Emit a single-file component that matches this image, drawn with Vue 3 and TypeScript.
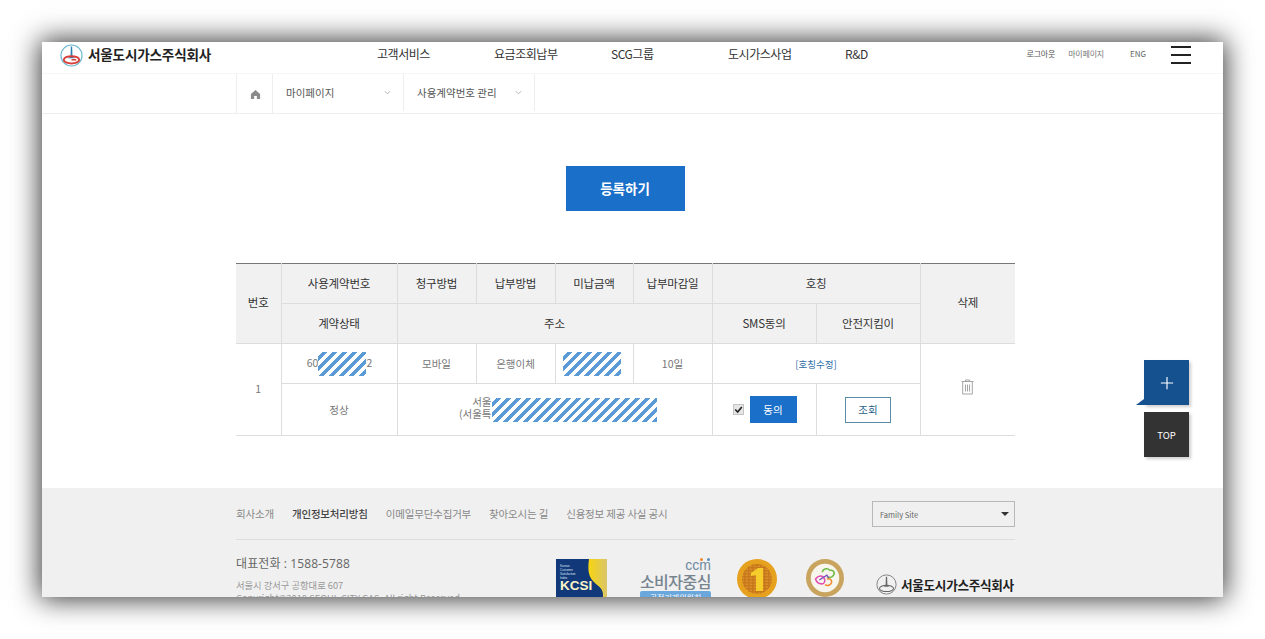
<script setup lang="ts">
const nav: string[] = ['고객서비스', '요금조회납부', 'SCG그룹', '도시가스사업', 'R&D']
const links: { t: string; strong?: boolean }[] = [
  { t: '회사소개' },
  { t: '개인정보처리방침', strong: true },
  { t: '이메일무단수집거부' },
  { t: '찾아오시는 길' },
  { t: '신용정보 제공 사실 공시' },
]
</script>

<template>
  <div class="stage">
    <div class="window">
      <header class="top">
        <a class="brand">
          <svg class="brand-mark" viewBox="0 0 24 24" width="23" height="23">
            <circle cx="12" cy="12" r="11" fill="#fff" stroke="#6db8d2" stroke-width="1.200" />
            <path d="M11.300 2.500h1.400l.3 9.500c.2 1.500 1.500 2.400 3 2.800H8c1.500-.4 2.800-1.300 3-2.800z" fill="#2f7fb0" />
            <ellipse cx="12" cy="16.500" rx="8" ry="3.800" fill="none" stroke="#d8403a" stroke-width="2" />
            <path d="M12 16.500h5" stroke="#d8403a" stroke-width="1.600" />
          </svg>
          <span class="brand-name">서울도시가스주식회사</span>
        </a>
        <nav class="gnb">
          <a v-for="n in nav" :key="n" class="gnb-item">{{ n }}</a>
        </nav>
        <div class="util">
          <a class="util-a">로그아웃</a>
          <a class="util-b">마이페이지</a>
          <a class="util-c">ENG</a>
          <span class="burger"><i></i><i></i><i></i></span>
        </div>
      </header>

      <div class="crumbs">
        <div class="crumb-home">
          <svg viewBox="0 0 12 12" width="11" height="11"><path d="M6 1 1 5.500V11h3.500V7.500h3V11H11V5.500z" fill="#8b8b8b" /></svg>
        </div>
        <div class="crumb"><span>마이페이지</span><svg viewBox="0 0 8 5" width="7" height="5"><path d="M1 1l3 3 3-3" fill="none" stroke="#aaa" /></svg></div>
        <div class="crumb"><span>사용계약번호 관리</span><svg viewBox="0 0 8 5" width="7" height="5"><path d="M1 1l3 3 3-3" fill="none" stroke="#aaa" /></svg></div>
      </div>

      <main class="content">
        <div class="reg-row"><button class="reg">등록하기</button></div>
        <table class="grid">
          <colgroup>
            <col class="c45" /><col class="c116" /><col class="c79" /><col class="c79" /><col class="c78" /><col class="c79" /><col class="c104" /><col class="c104" /><col class="c95" />
          </colgroup>
          <thead>
            <tr>
              <th rowspan="2" class="tall">번호</th>
              <th>사용계약번호</th>
              <th>청구방법</th>
              <th>납부방법</th>
              <th>미납금액</th>
              <th>납부마감일</th>
              <th colspan="2">호칭</th>
              <th rowspan="2" class="tall">삭제</th>
            </tr>
            <tr>
              <th>계약상태</th>
              <th colspan="4">주소</th>
              <th>SMS동의</th>
              <th>안전지킴이</th>
            </tr>
          </thead>
          <tbody>
            <tr class="r1">
              <td rowspan="2" class="num">1</td>
              <td class="acct">60<span class="hatch h1"></span>2</td>
              <td>모바일</td>
              <td>은행이체</td>
              <td><span class="hatch h2"></span></td>
              <td>10일</td>
              <td colspan="2"><a class="rename">[호칭수정]</a></td>
              <td rowspan="2" class="del">
                <svg viewBox="0 0 14 16" width="14" height="16">
                  <path d="M1 2.500h12M5 2.500V1h4v1.500M2.200 2.500V15h9.600V2.500M5 5.500v7M7 5.500v7M9 5.500v7" fill="none" stroke="#a5a5a5" stroke-width="1" />
                </svg>
              </td>
            </tr>
            <tr class="r2">
              <td>정상</td>
              <td colspan="4">
                <div class="addr">
                  <div class="addr-text">서울<br />(서울특</div>
                  <span class="hatch h3"></span>
                </div>
              </td>
              <td>
                <div class="sms">
                  <span class="check"><svg viewBox="0 0 11 11" width="9" height="9"><path d="M1.500 5.500 4.500 8.500 9.500 2.500" fill="none" stroke="#222" stroke-width="2" /></svg></span>
                  <button class="agree">동의</button>
                </div>
              </td>
              <td><button class="lookup">조회</button></td>
            </tr>
          </tbody>
        </table>
      </main>

      <footer class="foot">
        <div class="foot-links">
          <div class="links">
            <a v-for="l in links" :key="l.t" :class="{ strong: l.strong }">{{ l.t }}</a>
          </div>
          <div class="family">
            <span>Family Site</span>
            <i class="caret"></i>
          </div>
        </div>
        <div class="foot-info">
          <div class="addr-block">
            <p class="tel">대표전화 : 1588-5788</p>
            <p class="post">서울시 강서구 공항대로 607</p>
            <p class="post">Copyright©2019 SEOUL CITY GAS. All right Reserved.</p>
          </div>
          <div class="marks">
            <svg class="kcsi" viewBox="0 0 51 50" width="51" height="50">
              <defs>
                <linearGradient id="kg" x1="0" x2="1" y1="0" y2="0"><stop offset="0" stop-color="#f7d50f" /><stop offset="1" stop-color="#d9c56a" /></linearGradient>
              </defs>
              <rect width="51" height="50" fill="#11397a" />
              <path d="M33 0h18v36c-4-6-9-9-13-13-4-4-7-9-5-23z" fill="url(#kg)" />
              <path d="M38 23c6 4 9 8 9 13 0 6-4 11-8 14h12V30c-4-3-8-5-13-7z" fill="url(#kg)" />
              <text class="kcsi-s" x="4" y="8">Korean</text>
              <text class="kcsi-s" x="4" y="12">Customer</text>
              <text class="kcsi-s" x="4" y="16">Satisfaction</text>
              <text class="kcsi-s" x="4" y="20">Index</text>
              <text x="4" y="31" class="kcsi-t">KCSI</text>
            </svg>
            <div class="ccm">
              <span class="ccm-top">ccm<i class="dot d1"></i><i class="dot d2"></i></span>
              <span class="ccm-main">소비자중심</span>
              <span class="ccm-band">공정거래위원회</span>
            </div>
            <svg class="medal" viewBox="0 0 40 40" width="40" height="40">
              <defs>
                <pattern id="brick" width="4" height="3" patternUnits="userSpaceOnUse">
                  <rect width="4" height="3" fill="#c9781b" />
                  <rect x=".5" y=".5" width="2.500" height="1.500" fill="#d88f28" />
                </pattern>
              </defs>
              <circle cx="20" cy="20" r="20" fill="#e6a11e" />
              <circle cx="20" cy="20" r="15" fill="url(#brick)" />
              <path d="M14 14l7-5h5v23h-7V16l-5 1z" fill="#f5cc2a" />
            </svg>
            <svg class="medal2" viewBox="0 0 40 40" width="38" height="38">
              <circle cx="20" cy="20" r="20" fill="#c8a45f" />
              <circle cx="20" cy="20" r="15" fill="#f7f5ec" />
              <path d="M10 21c3-4 7-4 9-1 2 3 0 7-3 6-3 0-5-2-6-5z" fill="none" stroke="#e24fb0" stroke-width="1.600" />
              <path d="M17 14c1-4 6-5 8-2 3-1 6 2 4 5-1 2-4 3-7 2" fill="none" stroke="#6dbb45" stroke-width="1.600" />
              <path d="M20 27c3 2 7 0 7-3 0-2-2-4-5-3" fill="none" stroke="#ef8a34" stroke-width="1.600" />
              <path d="M14 22l8-5 2 3" fill="none" stroke="#7a4fc0" stroke-width="1.300" />
            </svg>
            <div class="foot-brand">
              <svg viewBox="0 0 24 24" width="21" height="21">
                <circle cx="12" cy="12" r="11" fill="none" stroke="#777" stroke-width="1" />
                <path d="M11.300 3h1.400l.3 9c.2 1.400 1.400 2.300 2.800 2.700H8.200c1.400-.4 2.600-1.300 2.800-2.700z" fill="#666" />
                <ellipse cx="12" cy="16.500" rx="8" ry="3.600" fill="none" stroke="#666" stroke-width="1.200" />
              </svg>
              <span>서울도시가스주식회사</span>
            </div>
          </div>
        </div>
      </footer>

      <div class="float">
        <button class="fab">
          <svg viewBox="0 0 16 16" width="14" height="14"><path d="M8 1v14M1 8h14" stroke="#fff" stroke-width="1.300" /></svg>
        </button>
        <button class="totop">TOP</button>
      </div>
    </div>
  </div>
</template>

<style>
html, body { margin: 0; background: #fff; overflow: hidden; }
</style>

<style scoped>
.stage {
  box-sizing: border-box;
  width: 1265px;
  height: 639px;
  padding: 42px;
  font-family: "Noto Sans CJK KR", "Noto Sans", sans-serif;
  color: #333;
  font-size: 12px;
}
.window {
  position: relative;
  height: 555px;
  overflow: hidden;
  background: #fff;
  box-shadow: 0 0 26px 2px rgba(0, 0, 0, 0.8);
}
p { margin: 0; }
a { cursor: pointer; }
button { font-family: inherit; border: 0; padding: 0; cursor: pointer; }

.top {
  display: flex;
  align-items: flex-start;
  height: 32px;
  border-bottom: 1px solid #f6f6f6;
  box-sizing: border-box;
}
.brand {
  display: flex;
  align-items: center;
  gap: 5px;
  width: 335px;
  padding: 1px 0 0 18px;
  box-sizing: border-box;
}
.brand-name {
  font-size: 13.600px;
  font-weight: 700;
  letter-spacing: -0.2px;
  color: #222;
  line-height: 22px;
  padding-bottom: 3px;
}
.gnb { display: flex; padding-top: 3px; }
.gnb-item {
  width: 117px;
  font-size: 12px;
  line-height: 18px;
  letter-spacing: -0.45px;
  color: #333;
}
.util {
  display: flex;
  align-items: flex-start;
  margin-left: auto;
  padding: 4px 32px 0 0;
  font-size: 8px;
  color: #777;
}
.util-a, .util-b, .util-c { line-height: 16px; white-space: nowrap; }
.util-a { color: #555; letter-spacing: -0.2px; }
.util-b { margin-left: 13px; letter-spacing: -0.2px; }
.util-c { margin-left: 26px; color: #666; width: 15px; }
.burger {
  display: flex;
  flex-direction: column;
  gap: 6px;
  width: 20px;
  margin-left: 26px;
}
.burger i { display: block; height: 2px; background: #222; }

.crumbs {
  display: flex;
  height: 39px;
  padding-left: 194px;
  border-bottom: 1px solid #eee;
}
.crumb-home {
  display: flex;
  align-items: center;
  justify-content: center;
  width: 37px;
  border-left: 1px solid #eee;
  border-right: 1px solid #eee;
  padding: 2px 0 0 1px;
  box-sizing: border-box;
}
.crumb {
  display: flex;
  align-items: center;
  justify-content: space-between;
  box-sizing: border-box;
  width: 131px;
  height: 37px;
  padding: 0 12px 0 13px;
  border-right: 1px solid #eee;
  font-size: 10.500px;
  color: #555;
}

.content {
  width: 779px;
  margin-left: 194px;
}
.reg-row {
  display: flex;
  justify-content: center;
  padding: 52px 0 52px 0;
  margin-left: -1px;
}
.reg {
  width: 119px;
  height: 45px;
  padding-bottom: 2px;
  background: #1a6fc9;
  color: #fff;
  font-size: 13.500px;
  font-weight: 700;
}
.grid {
  width: 779px;
  table-layout: fixed;
  border-collapse: collapse;
  border-top: 1px solid #777;
  border-bottom: 1px solid #ddd;
  margin-bottom: 52px;
}
.c45 { width: 45px; }
.c116 { width: 116px; }
.c79 { width: 79px; }
.c78 { width: 78px; }
.c104 { width: 104px; }
.c95 { width: 95px; }
th {
  height: 37px;
  padding: 0 0 2px;
  background: #f1f1f1;
  border: 1px solid #ddd;
  border-top: 0;
  font-size: 11.500px;
  font-weight: 400;
  color: #333;
  letter-spacing: -0.2px;
}
th.tall { padding-bottom: 4px; }
td {
  padding: 0;
  border: 1px solid #ddd;
  text-align: center;
  font-size: 10.500px;
  color: #777;
}
th:first-child, td:first-child { border-left: 0; }
tr > :last-child { border-right: 0; }
.r1 td { height: 39px; }
.r2 td { height: 51px; }
.grid tbody tr:last-child td { border-bottom: 0; }
td.num { padding-bottom: 2px; }
td.acct { padding-left: 1px; }
.hatch {
  display: inline-block;
  vertical-align: middle;
  height: 24px;
  background: repeating-linear-gradient(135deg, #fff 0 3.500px, #5b9bd5 3.500px 7px);
}
.h1 { width: 48px; }
.h2 { width: 58px; margin-right: 4px; }
.h3 { width: 165px; flex: none; }
.rename { color: #2d6ea8; font-size: 9.500px; }
.addr {
  display: flex;
  align-items: center;
  justify-content: flex-start;
  padding-left: 60px;
  line-height: 12px;
}
.addr-text { width: 34px; padding-bottom: 4px; text-align: right; white-space: nowrap; }
.sms {
  display: flex;
  align-items: center;
  padding-left: 20px;
  gap: 6px;
}
.check {
  display: flex;
  align-items: center;
  justify-content: center;
  width: 11px;
  height: 11px;
  background: #e6e6e6;
  border: 1px solid #c4c4c4;
  box-sizing: border-box;
}
.agree {
  width: 47px;
  height: 27px;
  background: #1a6fc9;
  color: #fff;
  font-size: 10.500px;
}
.lookup {
  width: 46px;
  height: 26px;
  background: #fff;
  border: 1px solid #5d8aa6;
  color: #1f5f86;
  font-size: 10.500px;
}
.del svg { display: block; margin: -5px auto 0; transform: translateX(-.5px); }

.foot {
  background: #f0f0f0;
  padding: 0 208px 0 194px;
  height: 109px;
  overflow: hidden;
}
.foot-links {
  display: flex;
  align-items: center;
  justify-content: space-between;
  height: 52px;
  box-sizing: border-box;
  border-bottom: 1px solid #ddd;
}
.links { display: flex; gap: 18px; font-size: 10.500px; color: #888; letter-spacing: -0.18px; }
.links .strong { color: #444; font-weight: 500; }
.family {
  display: flex;
  align-items: center;
  justify-content: space-between;
  box-sizing: border-box;
  width: 143px;
  height: 26px;
  padding: 1px 5px 0 7px;
  border: 1px solid #b8b8b8;
  font-size: 7.500px;
  color: #666;
}
.caret {
  width: 0;
  height: 0;
  border-left: 4.500px solid transparent;
  border-right: 4.500px solid transparent;
  border-top: 4.500px solid #333;
}
.foot-info { display: flex; padding-top: 19px; }
.addr-block { width: 320px; flex: none; white-space: nowrap; }
.tel {
  font-family: "Open Sans", "Noto Sans CJK KR", sans-serif;
  font-size: 12px;
  line-height: 9px;
  color: #666;
  letter-spacing: 0.1px;
  margin: 0 0 11px;
}
.post { font-size: 9.300px; line-height: 13px; color: #999; }
.marks { display: flex; align-items: flex-start; }
.kcsi { display: block; flex: none; }
.kcsi-s { font-family: "Liberation Sans", sans-serif; font-size: 3px; fill: #dfe6f2; }
.kcsi-t { font-family: "Liberation Sans", sans-serif; font-size: 13.500px; font-weight: 700; fill: #fbf4c8; }
.ccm {
  display: flex;
  flex-direction: column;
  align-items: flex-end;
  width: 71px;
  flex: none;
  margin-left: 33px;
}
.ccm-top { position: relative; font-family: "Liberation Sans", sans-serif; font-size: 14px; line-height: 13px; color: #6f8aa0; }
.dot { position: absolute; top: -1px; width: 3px; height: 3px; border-radius: 50%; }
.d1 { right: 8px; background: #ea8a2c; }
.d2 { right: 1px; background: #5a8fc2; }
.ccm-main { font-size: 16px; font-weight: 500; line-height: 19px; color: #76848f; letter-spacing: -0.5px; white-space: nowrap; }
.ccm-band { align-self: stretch; height: 14px; background: #6aa7dc; color: #fff; font-size: 8px; line-height: 13px; text-align: center; border-radius: 2px; }
.medal { display: block; margin-left: 26px; flex: none; }
.medal2 { display: block; margin-left: 29px; flex: none; }
.foot-brand {
  display: flex;
  align-items: center;
  gap: 4px;
  margin: 15px 0 0 32px;
  white-space: nowrap;
  font-size: 12.600px;
  font-weight: 700;
  color: #222;
  letter-spacing: -0.3px;
}

.float {
  position: absolute;
  left: 1102px;
  top: 318px;
  display: flex;
  flex-direction: column;
  gap: 7px;
}
.fab, .totop {
  position: relative;
  width: 45px;
  height: 45px;
  box-shadow: 2px 2px 3px rgba(0, 0, 0, 0.2);
  display: flex;
  align-items: center;
  justify-content: center;
}
.fab { background: #15508f; }
.fab::before {
  content: "";
  position: absolute;
  left: -8px;
  bottom: 0;
  border-bottom: 6px solid #15508f;
  border-left: 8px solid transparent;
}
.totop { background: #333; color: #fff; font-size: 9.500px; }
</style>
